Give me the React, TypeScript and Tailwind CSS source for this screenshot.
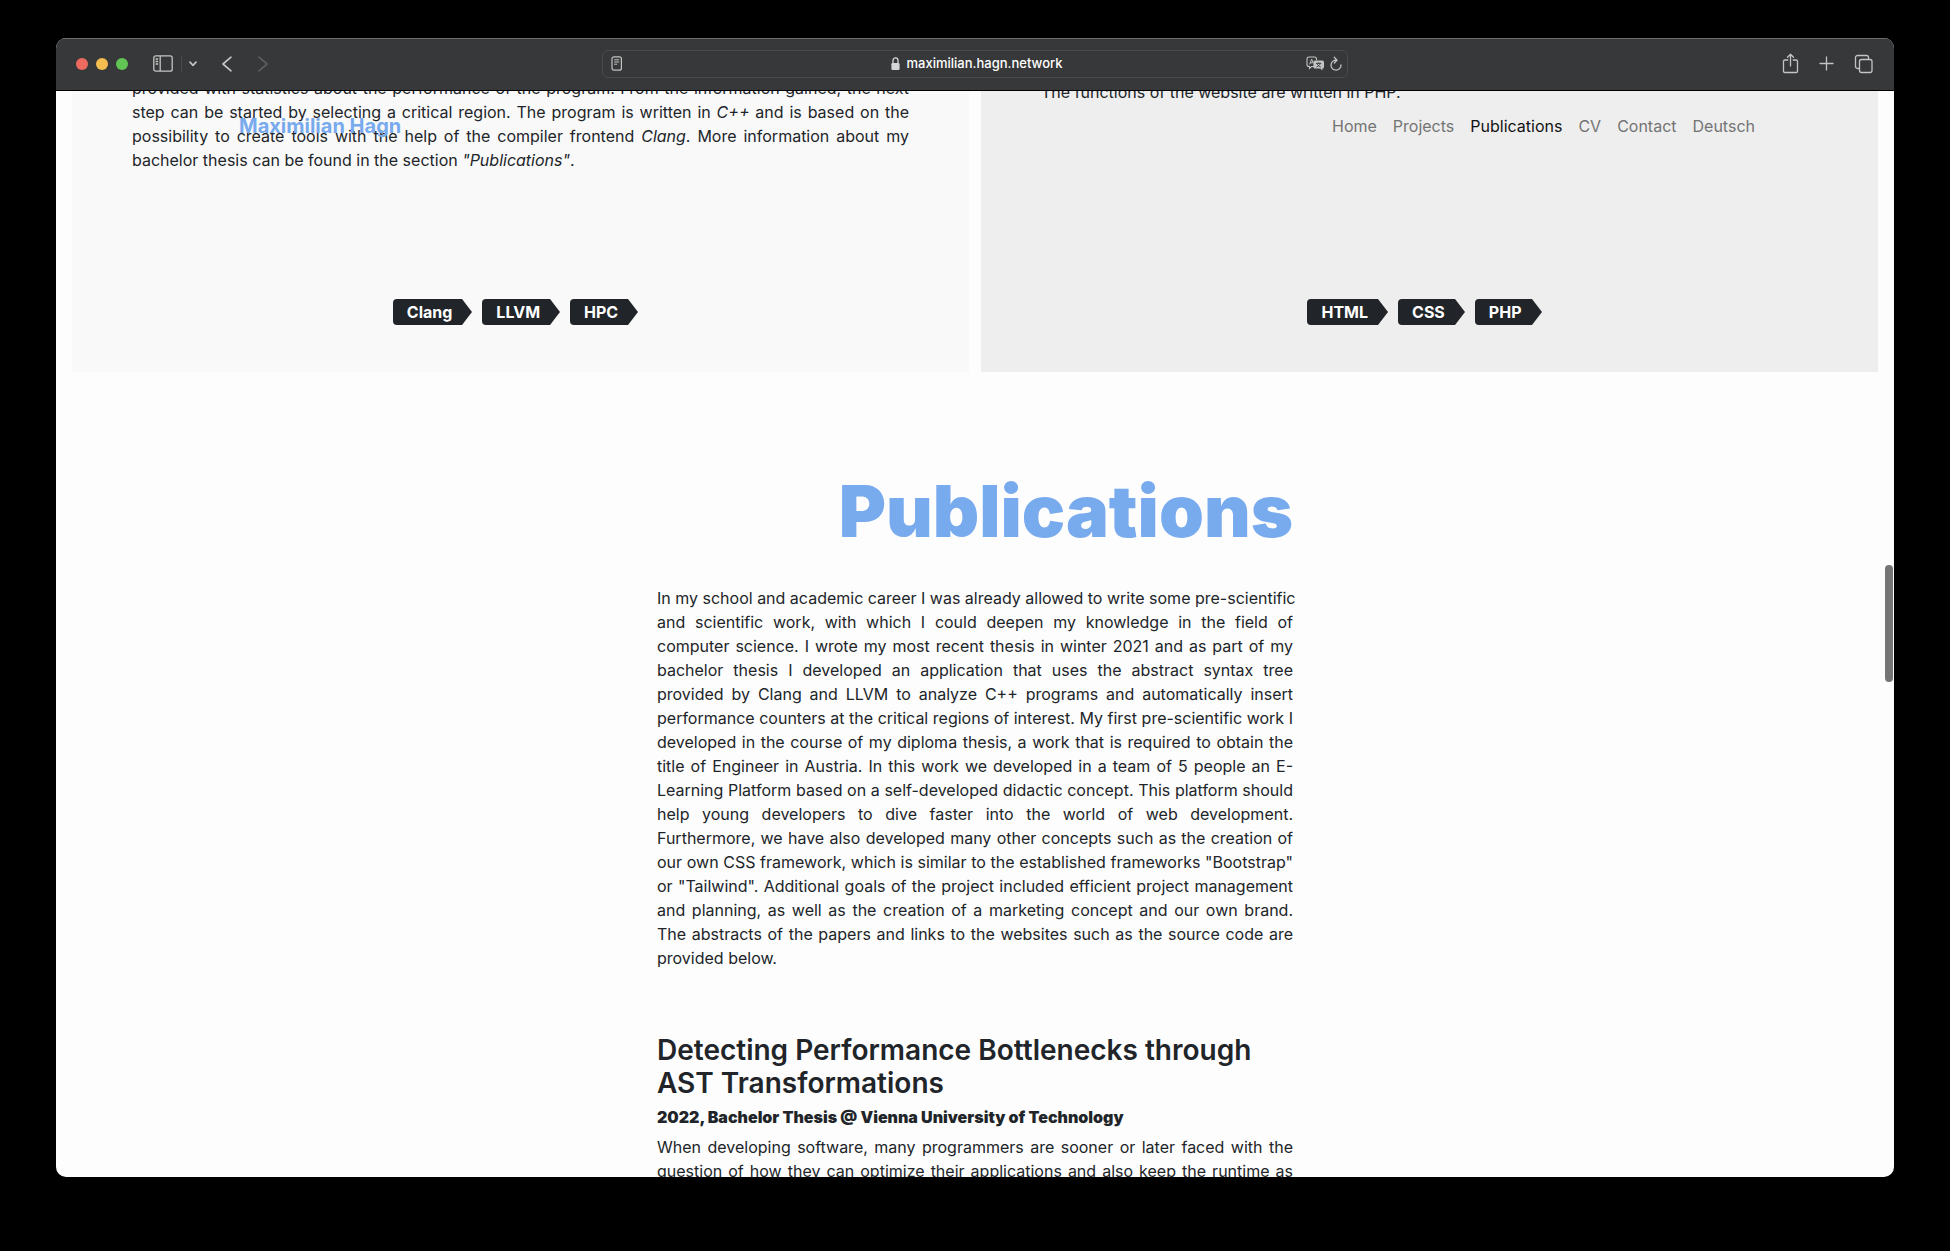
import type { ReactNode } from "react";

function Tag({ children }: { children: ReactNode }) {
  return (
    <li className="flex h-[26px]">
      <span className="flex items-center rounded-l bg-[#212529] pr-1 pl-[14px] font-bold text-white">{children}</span>
      <svg className="h-full w-[16px]" viewBox="0 0 16 26" preserveAspectRatio="none" aria-hidden="true">
        <path d="M0 0H6L16 13L6 26H0Z" fill="#212529" />
      </svg>
    </li>
  );
}

function Toolbar() {
  return (
    <header className="relative z-20 flex h-[53px] shrink-0 items-center border-t border-b border-t-[#6b6c6d] border-b-black bg-[#373839] px-5 pb-[2px] text-[#c3c4c4]">
      <div className="flex flex-1 items-center">
        <div className="flex gap-2">
          <button aria-label="Close" className="size-3 rounded-full bg-[#ed6a5f]" />
          <button aria-label="Minimize" className="size-3 rounded-full bg-[#f5bd4f]" />
          <button aria-label="Zoom" className="size-3 rounded-full bg-[#61c554]" />
        </div>
        <button aria-label="Sidebar" className="ml-[25px]">
          <svg width="20" height="17" viewBox="0 0 20 17" fill="none" stroke="currentColor" strokeWidth="1.3">
            <rect x="0.8" y="0.8" width="18.4" height="15.4" rx="2" />
            <path d="M7.2 1v15M2.6 4h2.6M2.6 6.5h2.6M2.6 9h2.6" />
          </svg>
        </button>
        <span className="ml-2 h-4 w-px bg-[#4b4c4d]" />
        <button aria-label="Tab groups" className="ml-[7px]">
          <svg width="8" height="6" viewBox="0 0 8 6" fill="none" stroke="currentColor" strokeWidth="1.7" strokeLinecap="round" strokeLinejoin="round">
            <path d="M1 1.2L4 4.3L7 1.2" />
          </svg>
        </button>
        <button aria-label="Back" className="ml-6">
          <svg width="12" height="16" viewBox="0 0 12 16" fill="none" stroke="currentColor" strokeWidth="1.7" strokeLinecap="round" strokeLinejoin="round">
            <path d="M10 1.2L2 8L10 14.8" />
          </svg>
        </button>
        <button aria-label="Forward" className="ml-6 text-[#5c5d5e]">
          <svg width="12" height="16" viewBox="0 0 12 16" fill="none" stroke="currentColor" strokeWidth="1.7" strokeLinecap="round" strokeLinejoin="round">
            <path d="M2 1.2L10 8L2 14.8" />
          </svg>
        </button>
      </div>
      <div className="flex h-7 w-[746px] items-center rounded-md border border-[#4a4b4c] pr-1 pl-2">
        <button aria-label="Reader">
          <svg width="12" height="15" viewBox="0 0 12 15" fill="none" stroke="currentColor" strokeWidth="1.2">
            <rect x="1" y="0.8" width="9.4" height="13.4" rx="2" />
            <path d="M3.2 3.8h5M3.2 6h5M3.2 8.2h3" strokeWidth="1" />
          </svg>
        </button>
        <div className="flex flex-1 items-center justify-center gap-[7px] pl-6">
          <svg width="9" height="14" viewBox="0 0 9 14" aria-hidden="true">
            <path d="M2 6V3.6a2.4 2.6 0 0 1 5 0V6" fill="none" stroke="#d6d6d6" strokeWidth="1.3" />
            <rect x="0.4" y="6" width="8.2" height="7" rx="1.2" fill="#d6d6d6" />
          </svg>
          <span className="text-[13px] font-medium text-white">maximilian.hagn.network</span>
        </div>
        <button aria-label="Translate">
          <svg width="19" height="15" viewBox="0 0 19 15">
            <path d="M8 10.5H5.5L3.5 12.5V10.5H3A2 2 0 0 1 1 8.5V3A2 2 0 0 1 3 1H8.5A2 2 0 0 1 10.5 3V4" fill="none" stroke="currentColor" strokeWidth="1.1" />
            <path d="M3.6 8.4L5.7 3.2L7.4 7.2M4.3 6.8H6.8" fill="none" stroke="currentColor" strokeWidth="1" />
            <path d="M9 4.5H16.4A1.6 1.6 0 0 1 18 6.1V11A1.6 1.6 0 0 1 16.4 12.600V14.600L14.200 12.600H9A1.600 1.600 0 0 1 7.400 11V6.100A1.600 1.600 0 0 1 9 4.500Z" fill="currentColor" />
            <path d="M10 7.4H15.2M12.6 6.2V7.4M14.2 7.600C13.600 9.200 12.200 10.400 10.400 11M11 7.600C11.800 9.400 13 10.400 14.800 11" fill="none" stroke="#373839" strokeWidth="0.9" />
          </svg>
        </button>
        <button aria-label="Reload" className="ml-1">
          <svg width="14" height="16" viewBox="0 0 14 16" fill="none" stroke="currentColor" strokeWidth="1.3" strokeLinecap="round" strokeLinejoin="round">
            <path d="M7.5 4.2A5 5 0 1 0 12 9M5.3 1.3L8 4.2L5.3 7" />
          </svg>
        </button>
      </div>
      <div className="flex flex-1 items-center justify-end gap-5">
        <button aria-label="Share">
          <svg width="17" height="21" viewBox="0 0 17 21" fill="none" stroke="currentColor" strokeWidth="1.3" strokeLinecap="round" strokeLinejoin="round">
            <path d="M5.8 7H2.8A1.3 1.3 0 0 0 1.5 8.3V18.2A1.3 1.3 0 0 0 2.8 19.5H14.2A1.3 1.3 0 0 0 15.5 18.2V8.3A1.3 1.3 0 0 0 14.2 7H11.2M8.5 13V1.5M5.5 4.3L8.5 1.3L11.5 4.3" />
          </svg>
        </button>
        <button aria-label="New tab">
          <svg width="15" height="15" viewBox="0 0 15 15" fill="none" stroke="currentColor" strokeWidth="1.3" strokeLinecap="round">
            <path d="M7.5 1V14M1 7.5H14" />
          </svg>
        </button>
        <button aria-label="Tab overview">
          <svg width="20" height="20" viewBox="0 0 20 20" fill="none" stroke="currentColor" strokeWidth="1.3" strokeLinejoin="round">
            <rect x="5.5" y="5.5" width="12.5" height="13" rx="2" />
            <path d="M5.5 14.5H3.5A2 2 0 0 1 1.5 12.5V3.5A2 2 0 0 1 3.5 1.5H12.5A2 2 0 0 1 14.5 3.5V5.5" />
          </svg>
        </button>
      </div>
    </header>
  );
}

const links = ["Home", "Projects", "Publications", "CV", "Contact", "Deutsch"];

function SiteNav() {
  return (
    <nav className="absolute inset-x-0 top-[21px] z-10 flex items-center justify-between pr-[139px] pl-[183px]">
      <a href="#home" className="text-xl font-bold text-[#78aaee]">Maximilian Hagn</a>
      <ul className="flex gap-4">
        {links.map((l) => (
          <li key={l}>
            <a href={`#${l.toLowerCase()}`} className={l === "Publications" ? "text-[#111213]" : "text-[#737474]"}>{l}</a>
          </li>
        ))}
      </ul>
    </nav>
  );
}

export default function App() {
  return (
    <div className="h-screen bg-black px-14 pt-[38px] pb-[74px] font-['Inter',sans-serif] text-base text-[#212529]">
      <div className="flex h-full flex-col overflow-hidden rounded-[10px] bg-[#fdfdfd]">
        <Toolbar />
        <main className="relative flex-1 overflow-hidden">
          <SiteNav />
          <section className="-mt-[15px] grid grid-cols-2 gap-3 px-4">
            <article className="flex h-[296px] flex-col justify-between bg-[#f9f9f9] px-[60px] pb-[47px]">
              <p className="text-justify">
                provided with statistics about the performance of the program. From the information gained, the next step can be started by selecting a critical region. The program is written in <em>C++</em> and is based on the possibility to create tools with the help of the compiler frontend <em>Clang</em>. More information about my bachelor thesis can be found in the section <em>"Publications"</em>.
              </p>
              <ul className="flex justify-center gap-[10px] pr-[10px]">
                <Tag>Clang</Tag>
                <Tag>LLVM</Tag>
                <Tag>HPC</Tag>
              </ul>
            </article>
            <article className="flex h-[296px] flex-col justify-between bg-[#eee] px-[60px] pb-[47px]">
              <p className="pt-1 text-justify">The functions of the website are written in PHP.</p>
              <ul className="flex justify-center gap-[10px] pr-[10px]">
                <Tag>HTML</Tag>
                <Tag>CSS</Tag>
                <Tag>PHP</Tag>
              </ul>
            </article>
          </section>
          <section className="mx-auto w-[636px] pt-[95px]">
            <h1 className="text-right text-[72px] leading-[88px] font-black text-[#78aaee]">Publications</h1>
            <p className="mt-[31px] text-justify">
              <span className="block whitespace-nowrap">In my school and academic career I was already allowed to write some pre-scientific </span>
              and scientific work, with which I could deepen my knowledge in the field of computer science. I wrote my most recent thesis in winter 2021 and as part of my bachelor thesis I developed an application that uses the abstract syntax tree provided by Clang and LLVM to analyze C++ programs and automatically insert performance counters at the critical regions of interest. My first pre-scientific work I developed in the course of my diploma thesis, a work that is required to obtain the title of Engineer in Austria. In this work we developed in a team of 5 people an E-Learning Platform based on a self-developed didactic concept. This platform should help young developers to dive faster into the world of web development. Furthermore, we have also developed many other concepts such as the creation of our own CSS framework, which is similar to the established frameworks "Bootstrap" or "Tailwind". Additional goals of the project included efficient project management and planning, as well as the creation of a marketing concept and our own brand. The abstracts of the papers and links to the websites such as the source code are provided below.
            </p>
            <h2 className="mt-16 text-[28px] leading-[33px] font-semibold">Detecting Performance Bottlenecks through AST Transformations</h2>
            <p className="mt-[5px] font-black">2022, Bachelor Thesis @ Vienna University of Technology</p>
            <p className="mt-[6px] text-justify">
              When developing software, many programmers are sooner or later faced with the question of how they can optimize their applications and also keep the runtime as short as possible.
            </p>
          </section>
          <div className="absolute top-[474px] right-px h-[117px] w-2 rounded-full bg-[#757575]" />
        </main>
      </div>
    </div>
  );
}
